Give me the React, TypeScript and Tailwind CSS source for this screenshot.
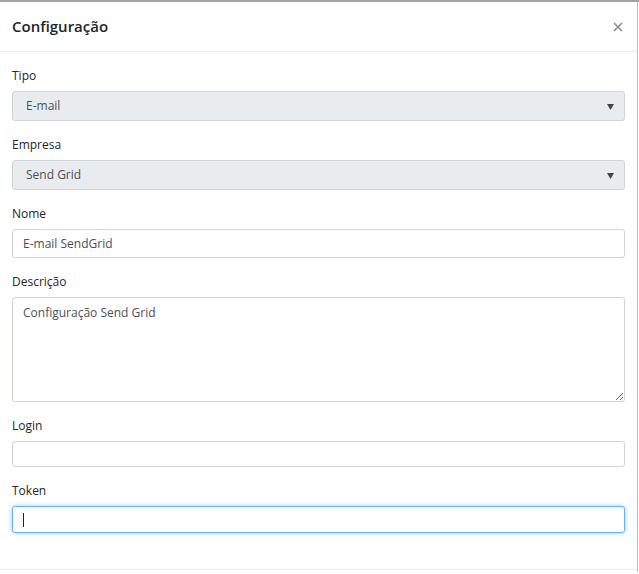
import React from "react";

const font = { fontFamily: '"Segoe UI", "Open Sans", "Noto Sans", sans-serif' };

function Label({ children }: { children: React.ReactNode }) {
  return (
    <label className="block h-[19px] text-[12px] leading-[19px] text-[#212529] mb-[6px]">
      {children}
    </label>
  );
}

function Select({ value }: { value: string }) {
  return (
    <div className="flex h-[30px] items-center justify-between rounded-[3px] border border-[#ced4da] bg-[#e9ecef] pl-[13px] pr-[10px] text-[12px] text-[#495057]">
      <span>{value}</span>
      <svg width="7" height="6" viewBox="0 0 7 6" className="mt-[1px]">
        <path d="M0 0 H7 L3.5 6 Z" fill="#444" />
      </svg>
    </div>
  );
}

export default function App() {
  return (
    <div className="min-h-[574px] w-[639px] bg-white" style={font}>
      <div className="h-[2px] bg-[#a3a3a3]" />
      <div className="w-[638px] border-r border-[#bdbdbd] bg-white">
        <div className="flex h-[50px] items-center justify-between border-b border-[#e9ecef] pl-[12px] pr-[14px]">
          <h5 className="text-[15px] font-semibold text-[#212529]">Configuração</h5>
          <svg width="10" height="10" viewBox="0 0 10 10">
            <path d="M1 1 L9 9 M9 1 L1 9" stroke="#8a8a8a" strokeWidth="1.6" />
          </svg>
        </div>

        <div className="px-[12px] pt-[14px] pb-[36px]">
          <div className="mb-[14px]">
            <Label>Tipo</Label>
            <Select value="E-mail" />
          </div>
          <div className="mb-[14px]">
            <Label>Empresa</Label>
            <Select value="Send Grid" />
          </div>
          <div className="mb-[14px]">
            <Label>Nome</Label>
            <input
              readOnly
              value="E-mail SendGrid"
              className="block h-[29px] w-full rounded-[3px] border border-[#ced4da] bg-white px-[10px] text-[12px] text-[#495057] outline-none"
            />
          </div>
          <div className="mb-[14px]">
            <Label>Descrição</Label>
            <textarea
              readOnly
              value="Configuração Send Grid"
              className="block h-[105px] w-full rounded-[3px] border border-[#ced4da] bg-white px-[10px] py-[6px] text-[12px] leading-[18px] text-[#495057] outline-none"
            />
          </div>
          <div className="mb-[14px]">
            <Label>Login</Label>
            <input
              readOnly
              className="block h-[26px] w-full rounded-[3px] border border-[#ced4da] bg-white px-[10px] text-[12px] outline-none"
            />
          </div>
          <div>
            <Label>Token</Label>
            <div className="flex h-[27px] w-full items-center rounded-[3px] border border-[#66b3f5] bg-white px-[10px] shadow-[0_0_4px_rgba(102,175,233,0.7)]">
              <span className="block h-[14px] w-[1px] bg-[#222]" />
            </div>
          </div>
        </div>
        <div className="border-t border-[#e9ecef] h-[3px]" />
      </div>
    </div>
  );
}
